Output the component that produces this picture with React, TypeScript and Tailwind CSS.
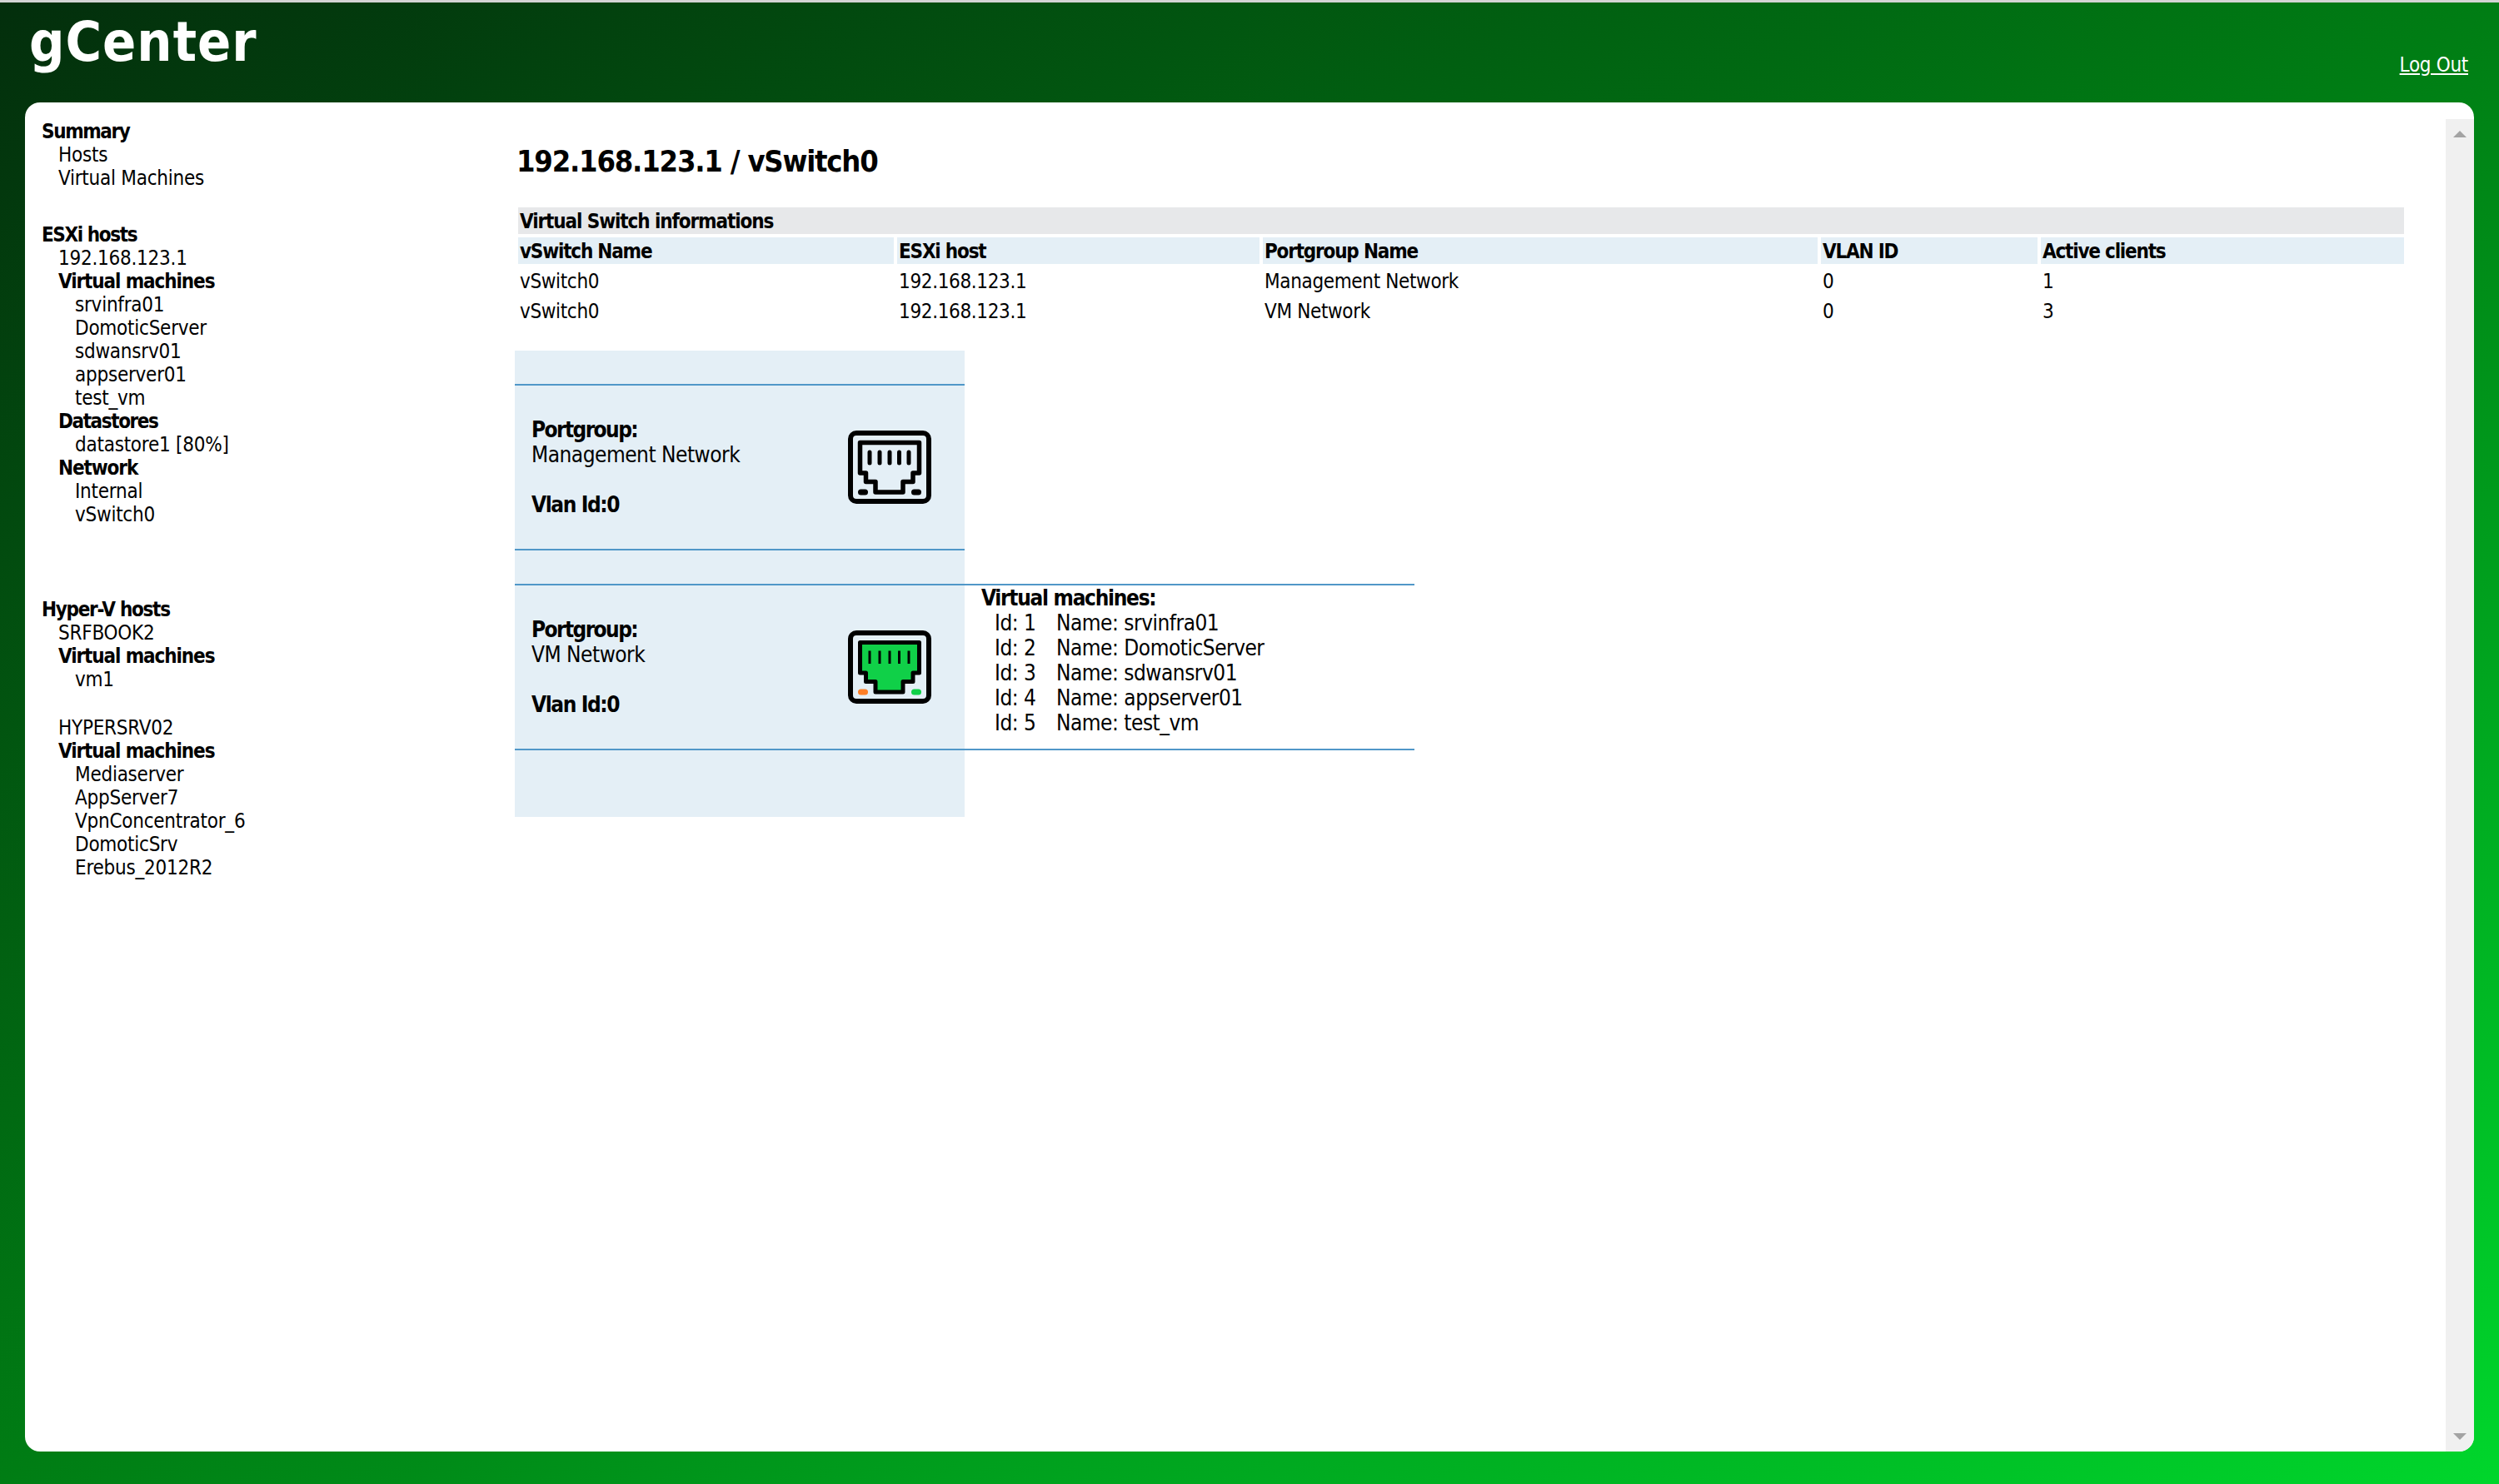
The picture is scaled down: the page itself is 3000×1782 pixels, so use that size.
const vms = ["srvinfra01", "DomoticServer", "sdwansrv01", "appserver01", "test_vm"];
const hyperVms = ["Mediaserver", "AppServer7", "VpnConcentrator_6", "DomoticSrv", "Erebus_2012R2"];

function RjIcon({ active }: { active?: boolean }) {
  return (
    <svg viewBox="0 0 100 88" className="w-[100px] h-[88px] shrink-0">
      <rect x="3" y="3" width="94" height="82" rx="7" fill="none" stroke="#000" strokeWidth="6" />
      <path
        d="M14.5 14.5H85.5V51H78V61.5H66V74H33V61.5H21.5V51H14.5Z"
        fill={active ? "#10d048" : "none"}
        stroke="#000"
        strokeWidth={active ? 5 : 5.5}
        strokeLinejoin="round"
      />
      {[26, 38, 50, 61.5, 73].map((x) => (
        <line
          key={x}
          x1={x}
          x2={x}
          y1={active ? 24.5 : 26}
          y2={active ? 40 : 39}
          stroke="#000"
          strokeWidth={active ? 3 : 5}
          strokeLinecap={active ? "butt" : "round"}
        />
      ))}
      <rect x="12" y="70.5" width="12" height="7" rx="3.5" fill={active ? "#fd7f27" : "#000"} />
      <rect x="76" y="70.5" width="12" height="7" rx="3.5" fill={active ? "#10d048" : "#000"} />
    </svg>
  );
}

function Portgroup({ name, active }: { name: string; active?: boolean }) {
  return (
    <div className="w-[540px] h-[196px] bg-[#e4eff6] pl-5 pr-10 flex items-center justify-between">
      <div className="leading-[30px] text-[26px] tracking-[-0.5px]">
        <div className="font-bold tracking-[-1.6px]">Portgroup:</div>
        <div>{name}</div>
        <div className="h-[30px]"></div>
        <div className="font-bold tracking-[-1.4px]">Vlan Id:0</div>
      </div>
      <RjIcon active={active} />
    </div>
  );
}

export default function App() {
  return (
    <div
      className="w-[3000px] h-[1782px] overflow-hidden border-t-[3px] border-[#d4d4d4] bg-[linear-gradient(to_bottom_right,#032e0c_0%,#007d14_50%,#00d62c_100%)] text-black"
      style={{ fontFamily: '"DejaVu Sans", sans-serif', fontStretch: "condensed" }}
    >
      <header className="h-[120px] relative">
        <div className="absolute left-[35px] top-[8px] text-[66px] leading-[80px] font-bold tracking-[1px] text-white">
          gCenter
        </div>
        <a className="absolute right-[37px] top-[60px] text-[24px] leading-[30px] tracking-[-0.3px] text-white underline">
          Log Out
        </a>
      </header>

      <div className="mx-[30px] h-[1620px] bg-white rounded-[18px] overflow-hidden flex">
        <nav className="w-[588px] shrink-0 pl-5 pt-[21px] text-[24px] leading-[28px] tracking-[-0.25px]">
          <div className="font-bold tracking-[-1.4px]">Summary</div>
          <div className="pl-5">
            <div>Hosts</div>
            <div>Virtual Machines</div>
          </div>

          <div className="font-bold tracking-[-1.4px] mt-[40px]">ESXi hosts</div>
          <div className="pl-5">
            <div>192.168.123.1</div>
            <div className="font-bold tracking-[-1.1px]">Virtual machines</div>
            <div className="pl-5">
              {vms.map((vm) => (
                <div key={vm}>{vm}</div>
              ))}
            </div>
            <div className="font-bold tracking-[-1.4px]">Datastores</div>
            <div className="pl-5">datastore1 [80%]</div>
            <div className="font-bold tracking-[-1.1px]">Network</div>
            <div className="pl-5">
              <div>Internal</div>
              <div>vSwitch0</div>
            </div>
          </div>

          <div className="font-bold tracking-[-1.3px] mt-[86px]">Hyper-V hosts</div>
          <div className="pl-5">
            <div>SRFBOOK2</div>
            <div className="font-bold tracking-[-1.1px]">Virtual machines</div>
            <div className="pl-5">vm1</div>
            <div className="mt-[30px]">HYPERSRV02</div>
            <div className="font-bold tracking-[-1.1px]">Virtual machines</div>
            <div className="pl-5">
              {hyperVms.map((vm) => (
                <div key={vm}>{vm}</div>
              ))}
            </div>
          </div>
        </nav>

        <main className="flex-1 pt-[45px]">
          <h1 className="pl-[2px] text-[36px] leading-[52px] font-bold tracking-[-1.2px]">192.168.123.1 / vSwitch0</h1>

          <div className="mt-[29px] ml-[4px] w-[2264px] text-[24px] leading-[34px] tracking-[-0.35px]">
            <div className="h-8 bg-[#e7e8ea] pl-[2px] font-bold tracking-[-1.1px]">Virtual Switch informations</div>
            <div className="mt-1 grid grid-cols-[451px_435px_666px_260px_1fr] auto-rows-[32px] gap-1">
              {["vSwitch Name", "ESXi host", "Portgroup Name", "VLAN ID", "Active clients"].map((h) => (
                <div key={h} className="bg-[#e4eff6] pl-[2px] font-bold tracking-[-1.2px]">
                  {h}
                </div>
              ))}
              {["vSwitch0", "192.168.123.1", "Management Network", "0", "1"].map((c, i) => (
                <div key={i} className="pl-[2px]">
                  {c}
                </div>
              ))}
              {["vSwitch0", "192.168.123.1", "VM Network", "0", "3"].map((c, i) => (
                <div key={i} className="pl-[2px]">
                  {c}
                </div>
              ))}
            </div>
          </div>

          <div className="mt-[32px]">
            <div className="w-[540px] h-[40px] bg-[#e4eff6]"></div>
            <div className="w-[540px] border-y-2 border-[#5097c8]">
              <Portgroup name="Management Network" />
            </div>
            <div className="w-[540px] h-[40px] bg-[#e4eff6]"></div>
            <div className="w-[1080px] border-y-2 border-[#5097c8] flex">
              <Portgroup name="VM Network" active />
              <div className="pl-5 text-[26px] leading-[30px] tracking-[-0.5px]">
                <div className="font-bold tracking-[-1.3px]">Virtual machines:</div>
                {vms.map((vm, i) => (
                  <div key={vm} className="pl-4 flex">
                    <span className="w-[74px]">Id: {i + 1}</span>
                    <span>Name: {vm}</span>
                  </div>
                ))}
              </div>
            </div>
            <div className="w-[540px] h-[80px] bg-[#e4eff6]"></div>
          </div>
        </main>

        <div className="w-[34px] shrink-0 mt-[20px] bg-[#f0f0f0] flex flex-col justify-between items-center py-[14px]">
          <svg viewBox="0 0 16 8" className="w-4 h-2">
            <path d="M8 0L16 8H0Z" fill="#a3a3a3" />
          </svg>
          <svg viewBox="0 0 16 8" className="w-4 h-2">
            <path d="M0 0H16L8 8Z" fill="#a3a3a3" />
          </svg>
        </div>
      </div>
    </div>
  );
}
